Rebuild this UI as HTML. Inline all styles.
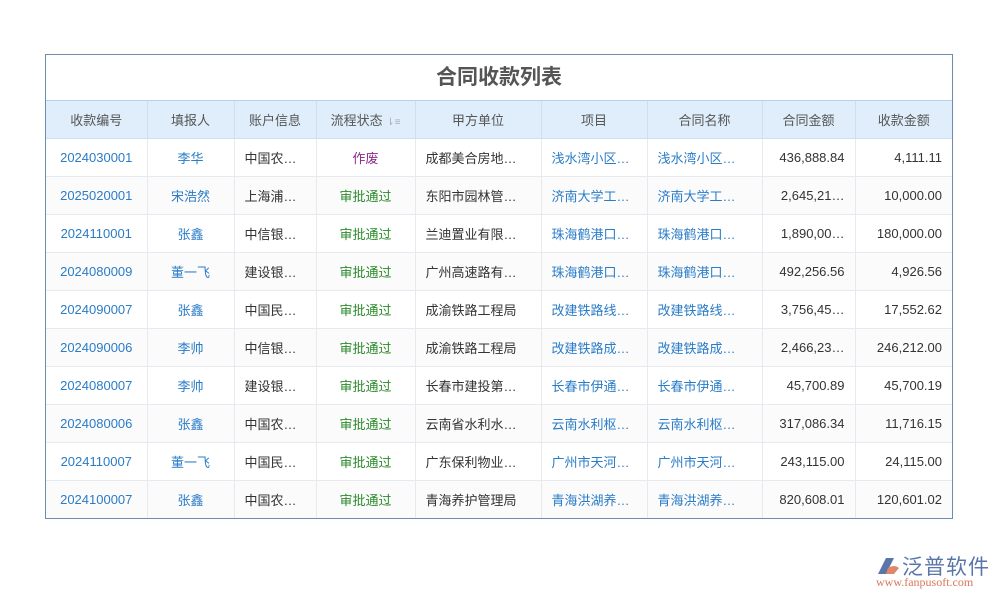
<!DOCTYPE html>
<html><head><meta charset="utf-8"><style>
body{margin:0;width:1000px;height:600px;background:#fff;font-family:"Liberation Sans","Noto Sans CJK SC",sans-serif;position:relative;overflow:hidden}
.wrap{position:absolute;left:45px;top:54px;width:906px;border:1px solid #6c8db0;}
.title{height:45px;line-height:45px;text-align:center;font-size:21px;font-weight:bold;color:#555;border-bottom:1px solid #b8d0e6}
table{border-collapse:collapse;width:906px;table-layout:fixed;font-size:13px}
th{background:#dfeefa;color:#555;font-weight:normal;height:37px;padding:0;border-right:1px solid #cddff0;border-bottom:1px solid #cddff0}
td{height:37px;border-right:1px solid #e6e9ee;border-bottom:1px solid #e6e9ee;color:#333;white-space:nowrap;overflow:hidden;padding:0 10px}
tr:nth-child(odd) td{background:#fbfbfb}
tr:last-child td{border-bottom:none}
th:last-child,td:last-child{border-right:none}
.c{text-align:center}.r{text-align:right}
.b{color:#2a7cc7}.g{color:#2b8a2b}.p{color:#8a2a88}
.logo{position:absolute;left:872px;top:551px}
</style></head><body>
<div class="wrap">
<div class="title">合同收款列表</div>
<table>
<colgroup><col style="width:101px"><col style="width:87px"><col style="width:82px"><col style="width:99px"><col style="width:126px"><col style="width:106px"><col style="width:115px"><col style="width:93px"><col style="width:97px"></colgroup>
<tr><th>收款编号</th><th>填报人</th><th>账户信息</th><th>流程状态 <span style="font-size:10px;color:#aab">⇂≡</span></th><th>甲方单位</th><th>项目</th><th>合同名称</th><th>合同金额</th><th>收款金额</th></tr>
<tr><td class="c b">2024030001</td><td class="c b">李华</td><td>中国农…</td><td class="c p">作废</td><td>成都美合房地…</td><td class="b">浅水湾小区…</td><td class="b">浅水湾小区…</td><td class="r">436,888.84</td><td class="r">4,111.11</td></tr>
<tr><td class="c b">2025020001</td><td class="c b">宋浩然</td><td>上海浦…</td><td class="c g">审批通过</td><td>东阳市园林管…</td><td class="b">济南大学工…</td><td class="b">济南大学工…</td><td class="r">2,645,21…</td><td class="r">10,000.00</td></tr>
<tr><td class="c b">2024110001</td><td class="c b">张鑫</td><td>中信银…</td><td class="c g">审批通过</td><td>兰迪置业有限…</td><td class="b">珠海鹤港口…</td><td class="b">珠海鹤港口…</td><td class="r">1,890,00…</td><td class="r">180,000.00</td></tr>
<tr><td class="c b">2024080009</td><td class="c b">董一飞</td><td>建设银…</td><td class="c g">审批通过</td><td>广州高速路有…</td><td class="b">珠海鹤港口…</td><td class="b">珠海鹤港口…</td><td class="r">492,256.56</td><td class="r">4,926.56</td></tr>
<tr><td class="c b">2024090007</td><td class="c b">张鑫</td><td>中国民…</td><td class="c g">审批通过</td><td>成渝铁路工程局</td><td class="b">改建铁路线…</td><td class="b">改建铁路线…</td><td class="r">3,756,45…</td><td class="r">17,552.62</td></tr>
<tr><td class="c b">2024090006</td><td class="c b">李帅</td><td>中信银…</td><td class="c g">审批通过</td><td>成渝铁路工程局</td><td class="b">改建铁路成…</td><td class="b">改建铁路成…</td><td class="r">2,466,23…</td><td class="r">246,212.00</td></tr>
<tr><td class="c b">2024080007</td><td class="c b">李帅</td><td>建设银…</td><td class="c g">审批通过</td><td>长春市建投第…</td><td class="b">长春市伊通…</td><td class="b">长春市伊通…</td><td class="r">45,700.89</td><td class="r">45,700.19</td></tr>
<tr><td class="c b">2024080006</td><td class="c b">张鑫</td><td>中国农…</td><td class="c g">审批通过</td><td>云南省水利水…</td><td class="b">云南水利枢…</td><td class="b">云南水利枢…</td><td class="r">317,086.34</td><td class="r">11,716.15</td></tr>
<tr><td class="c b">2024110007</td><td class="c b">董一飞</td><td>中国民…</td><td class="c g">审批通过</td><td>广东保利物业…</td><td class="b">广州市天河…</td><td class="b">广州市天河…</td><td class="r">243,115.00</td><td class="r">24,115.00</td></tr>
<tr><td class="c b">2024100007</td><td class="c b">张鑫</td><td>中国农…</td><td class="c g">审批通过</td><td>青海养护管理局</td><td class="b">青海洪湖养…</td><td class="b">青海洪湖养…</td><td class="r">820,608.01</td><td class="r">120,601.02</td></tr>
</table>
</div>
<div class="logo">
<svg width="26" height="20" style="position:absolute;left:2px;top:5px"><path d="M4 18 L12 2 L20 2 L12 18Z" fill="#5a76a8"/><path d="M14 12 Q20 8 25 12 L20 18 L12 18Z" fill="#e0876a"/></svg>
<div style="position:absolute;left:30px;top:0;font-size:21px;color:#5a76a8;white-space:nowrap;letter-spacing:1px">泛普软件</div>
<div style="position:absolute;left:4px;top:24px;font-size:12px;color:#d9765a;font-family:'Liberation Serif',serif;white-space:nowrap">www.fanpusoft.com</div>
</div>
</body></html>
